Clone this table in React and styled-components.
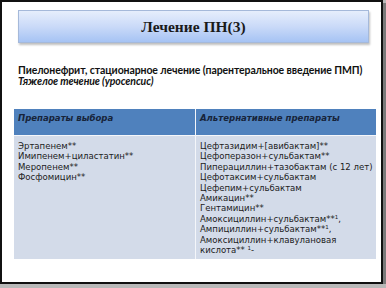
import React from 'react';
import styled, { createGlobalStyle } from 'styled-components';

const GlobalStyle = createGlobalStyle`
	html, body {
		margin: 0;
		padding: 0;
		background: #b9b9b9;
	}
`;

const firstChoice = ['Эртапенем**', 'Имипенем+циластатин**', 'Меропенем**', 'Фосфомицин**'];

const alternatives = [
	{ text: 'Цефтазидим+[авибактам]**' },
	{ text: 'Цефоперазон+сульбактам**' },
	{ text: 'Пиперациллин+тазобактам (с 12 лет)' },
	{ text: 'Цефотаксим+сульбактам' },
	{ text: 'Цефепим+сульбактам' },
	{ text: 'Амикацин**' },
	{ text: 'Гентамицин**' },
	{ text: 'Амоксициллин+сульбактам**', sup: '1', tail: ',' },
	{ text: 'Ампициллин+сульбактам**', sup: '1', tail: ',' },
	{ text: 'Амоксициллин+клавулановая' },
	{ text: 'кислота** ', sup: '1', tail: '-' },
];

const App = () => {
	return (
		<>
			<GlobalStyle />
			<Slide>
				<TitleBox>
					<Title>Лечение ПН(3)</Title>
				</TitleBox>
				<Intro>
					<Lead>Пиелонефрит, стационарное лечение (парентеральное введение ПМП)</Lead>
					<Severity>Тяжелое течение (уросепсис)</Severity>
				</Intro>
				<Table>
					<HeadCell>Препараты выбора</HeadCell>
					<HeadCell>Альтернативные препараты</HeadCell>
					<BodyCell>
						{firstChoice.map((d) => (
							<Drug key={d}>{d}</Drug>
						))}
					</BodyCell>
					<BodyCell>
						{alternatives.map((d) => (
							<Drug key={d.text}>
								{d.text}
								{d.sup && <Sup>{d.sup}</Sup>}
								{d.tail}
							</Drug>
						))}
					</BodyCell>
				</Table>
			</Slide>
		</>
	);
};

export default App;

// Styles

const Slide = styled.div`
	box-sizing: border-box;
	width: 383px;
	height: 284px;
	background: #ffffff;
	border: 2px solid #111111;
	box-shadow: 3px 3px 0 #7a7a7a;
	padding: 8px 0 0 12px;
	overflow: hidden;
`;

const TitleBox = styled.div`
	box-sizing: border-box;
	width: 351px;
	height: 33px;
	margin-left: 4px;
	display: flex;
	align-items: center;
	justify-content: center;
	background: linear-gradient(#e6eefc 0%, #cadaf8 50%, #a6c3f4 100%);
	border: 1px solid #a5b9da;
	box-shadow: 1px 2px 2px rgba(0, 0, 0, 0.25);
`;

const Title = styled.h1`
	margin: 0;
	font-family: 'Liberation Serif', serif;
	font-weight: bold;
	font-size: 15.5px;
	color: #1a1a1a;
`;

const Intro = styled.div`
	margin: 22px 0 0 4px;
	font-family: Lato, 'Noto Sans', sans-serif;
	font-weight: bold;
	font-size: 10.5px;
	line-height: 11px;
	color: #111111;
	white-space: nowrap;
`;

const Lead = styled.div`
	letter-spacing: -0.1px;
`;

const Severity = styled.div`
	font-style: italic;
	letter-spacing: -0.1px;
`;

const Table = styled.div`
	width: 362px;
	margin-top: 22px;
	display: grid;
	grid-template-columns: 181px 180px;
	column-gap: 1px;
	row-gap: 1px;
	background: #f4f6fa;
	font-family: 'DejaVu Sans', Verdana, sans-serif;
	font-size: 8.55px;
`;

const HeadCell = styled.div`
	height: 26px;
	box-sizing: border-box;
	padding: 4px 4px 0 4px;
	background: #4f81bd;
	color: #17243a;
	font-weight: bold;
	font-style: italic;
	line-height: 11px;
`;

const BodyCell = styled.div`
	box-sizing: border-box;
	height: 123px;
	padding: 5px 4px 0 4px;
	background-color: #d3dbe9;
	color: #1c1c1c;
	line-height: 10.4px;
`;

const Drug = styled.div`
	white-space: nowrap;
	height: 10.4px;
`;

const Sup = styled.span`
	position: relative;
	top: -3px;
	font-size: 5.5px;
	line-height: 0;
`;
